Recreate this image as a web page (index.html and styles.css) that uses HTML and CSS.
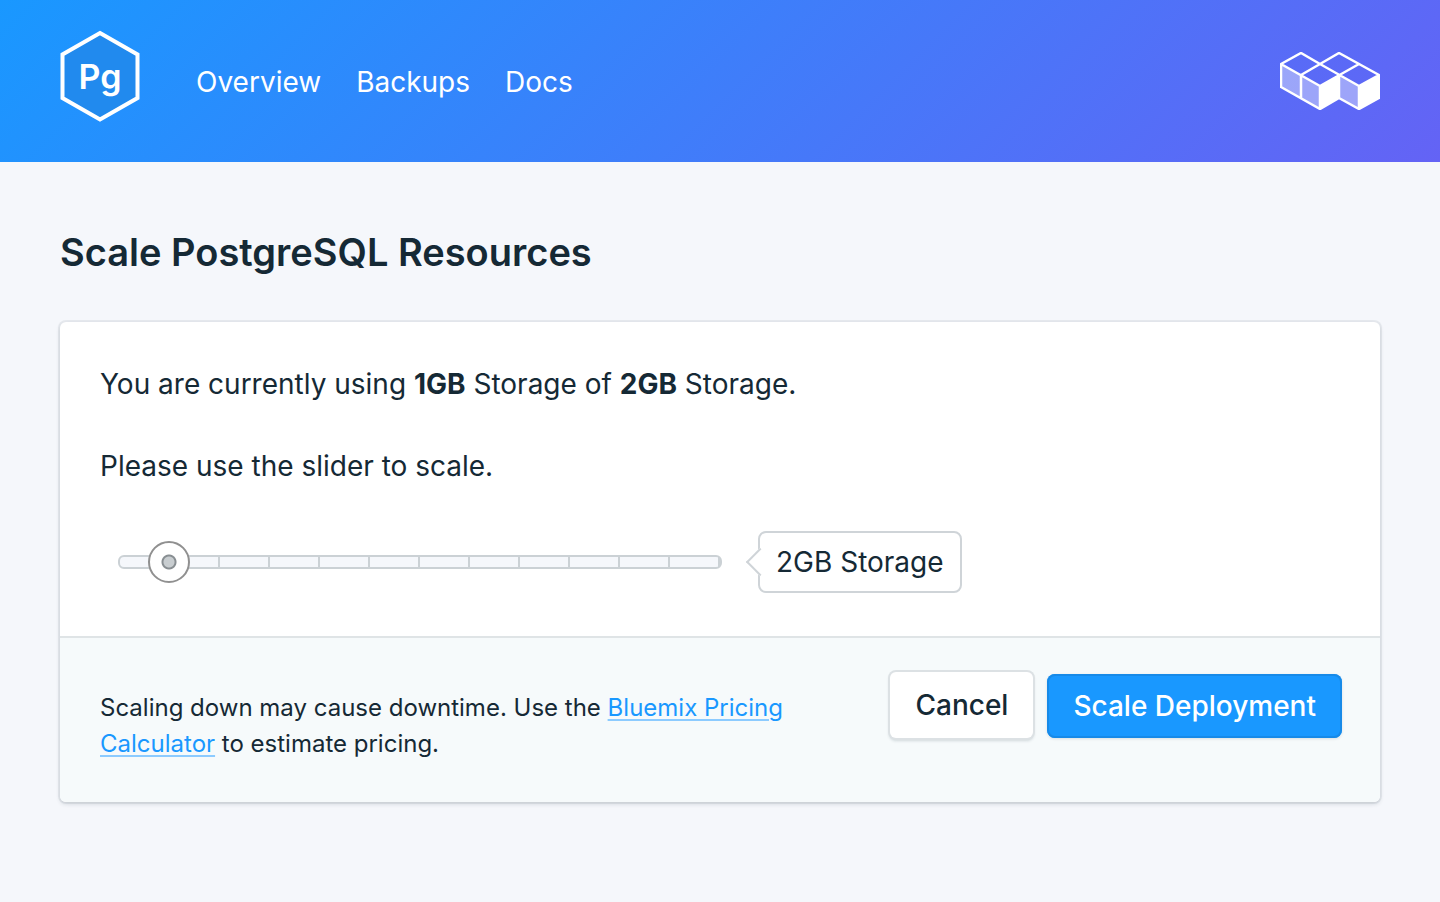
FILE: index.html
```html
<!DOCTYPE html>
<html lang="en">
<head>
<meta charset="utf-8">
<meta name="viewport" content="width=device-width, initial-scale=1">
<title>Scale PostgreSQL Resources</title>
<link rel="stylesheet" href="styles.css">
</head>
<body>
<header class="topbar">
  <svg class="logo" viewBox="0 0 80 92" aria-label="PostgreSQL" role="img">
    <polygon class="logo-hex" points="40,3 77.5,24.5 77.5,68 40,89.5 2.5,68 2.5,24.5"/>
    <text class="logo-text" x="40" y="59" text-anchor="middle">Pg</text>
  </svg>
  <nav class="nav">
    <a href="#overview">Overview</a>
    <a href="#backups">Backups</a>
    <a href="#docs">Docs</a>
  </nav>
  <svg class="cubes" viewBox="0 0 100 58" aria-hidden="true">
    <path class="cube-shade" d="M1 12 21 23V46L1 35ZM21 23 40 34V57L21 46ZM59 23 79 34V57L59 46Z"/>
    <path class="cube-light" d="M40 34 59 23V46L40 57ZM79 34 99 23V46L79 57Z"/>
    <path class="cube-line" d="M1 12 21 1 40 12 59 1 99 23V46L79 57 59 46 40 57 1 35ZM1 12 40 34 79 12M21 23 40 12 79 34 99 23M21 23V46M40 34V57M59 23V46M79 34V57"/>
  </svg>
</header>
<main class="page">
  <h1>Scale PostgreSQL Resources</h1>
  <form class="card">
    <div class="card-body">
      <p>You are currently using <strong>1GB</strong> Storage of <strong>2GB</strong> Storage.</p>
      <p><label for="storage">Please use the slider to scale.</label></p>
      <div class="scale-row">
        <div class="slider">
          <div class="ticks"></div>
          <input id="storage" type="range" min="1" max="13" value="2">
        </div>
        <output class="bubble" for="storage">2GB Storage</output>
      </div>
    </div>
    <div class="card-footer">
      <p class="note">Scaling down may cause downtime. Use the <a href="#pricing">Bluemix Pricing Calculator</a> to estimate pricing.</p>
      <div class="actions">
        <button type="button" class="btn">Cancel</button>
        <button type="submit" class="btn btn-primary">Scale Deployment</button>
      </div>
    </div>
  </form>
</main>
</body>
</html>
```
FILE: styles.css
```css
* { box-sizing: border-box; }

body {
  margin: 0;
  background: #f5f7fb;
  color: #152935;
  font-family: Inter, "Liberation Sans", sans-serif;
  font-size: 28px;
  line-height: 42px;
}

.topbar {
  display: flex;
  align-items: center;
  padding: 30px 60px 40px;
  background: linear-gradient(135deg, #1998ff, #6463f5);
}
.logo { width: 80px; height: 92px; }
.logo-hex { fill: #218aee; stroke: #fff; stroke-width: 4; }
.logo-text { fill: #fff; font-size: 34px; font-weight: 600; }
.nav { display: flex; gap: 35px; margin-left: 56px; padding-top: 12px; }
.nav a { color: #fff; text-decoration: none; }
.cubes { width: 100px; height: 58px; margin-left: auto; margin-top: 10px; }
.cube-shade { fill: #fff; fill-opacity: 0.4; }
.cube-light { fill: #fff; }
.cube-line { fill: none; stroke: #fff; stroke-width: 2.5; stroke-linejoin: round; }

.page { padding: 60px; }
h1 {
  margin: 0 0 40px;
  font-size: 38px;
  line-height: 60px;
  font-weight: 600;
}

.card {
  background: #fff;
  border-radius: 6px;
  box-shadow: 0 0 0 2px rgba(21, 41, 53, 0.06), 0 2px 4px rgba(21, 41, 53, 0.16);
}
.card-body { padding: 41px 40px 43px; }
.card-body p { margin: 0 0 40px; }
.scale-row { display: flex; align-items: center; gap: 16px; padding-top: 4px; }
.slider { display: grid; align-items: center; flex: 0 1 644px; margin-left: -2px; }
.slider > * { grid-area: 1 / 1; }
.ticks {
  height: 14px;
  margin: 0 20px;
  border: 2px solid #cbd1d5;
  border-radius: 6px;
  background: repeating-linear-gradient(90deg, #f5f7fb 0 48px, #cbd1d5 48px 50px);
}
#storage {
  appearance: none;
  width: 100%;
  height: 42px;
  margin: 0;
  background: transparent;
}
#storage::-webkit-slider-thumb {
  appearance: none;
  width: 42px;
  height: 42px;
  border: 2px solid #909090;
  border-radius: 50%;
  background: radial-gradient(circle, #c8cdd0 0 5px, #888e92 6px 7px, #fff 8px);
}
.bubble {
  position: relative;
  padding: 8px 16px;
  border: 2px solid #cfd4d8;
  border-radius: 8px;
  background: #fff;
  white-space: nowrap;
}
.bubble::before {
  content: "";
  position: absolute;
  left: -10px;
  top: 19px;
  width: 18px;
  height: 18px;
  border: solid #cfd4d8;
  border-width: 0 0 2px 2px;
  background: #fff;
  transform: rotate(45deg);
}

.card-footer {
  display: flex;
  align-items: flex-start;
  justify-content: space-between;
  gap: 40px;
  padding: 34px 38px 40px 40px;
  border-top: 2px solid #dfe4e6;
  border-radius: 0 0 6px 6px;
  background: #f6fafb;
}
.note {
  flex: 0 1 700px;
  margin: 18px 0 0;
  font-size: 24px;
  line-height: 36px;
}
.note a {
  color: #1998ff;
  text-decoration: underline #8ccbff 2px;
  text-underline-offset: 3px;
}
.actions { display: flex; align-items: flex-end; gap: 14px; }
.btn {
  padding: 12px 25px;
  border: 0;
  border-radius: 6px;
  background: #fff;
  color: inherit;
  font: inherit;
  font-weight: 500;
  line-height: 42px;
  white-space: nowrap;
  box-shadow: 0 0 0 2px #dce1e4, 0 2px 3px 1px rgba(21, 41, 53, 0.16);
}
.btn-primary {
  padding: 11px 26px;
  border-radius: 8px;
  background: #1998ff;
  color: #fff;
  box-shadow: inset 0 0 0 2px #178ae8, 0 1px 3px rgba(21, 41, 53, 0.12);
}
```
